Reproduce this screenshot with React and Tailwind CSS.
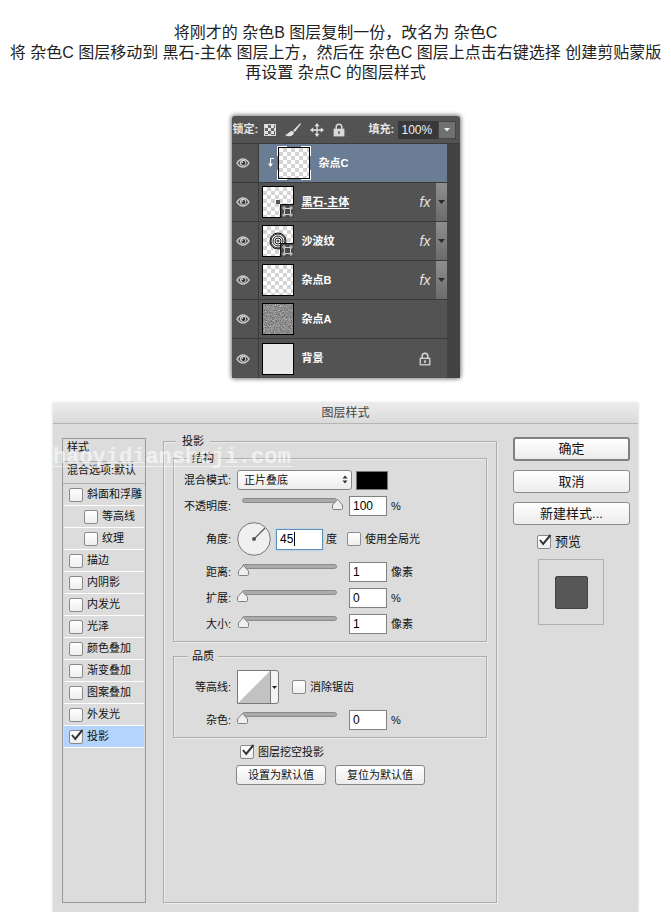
import React, { useState } from 'react';

const EFFECTS = [
  { name: '斜面和浮雕' },
  { name: '等高线', indent: true },
  { name: '纹理', indent: true },
  { name: '描边' },
  { name: '内阴影' },
  { name: '内发光' },
  { name: '光泽' },
  { name: '颜色叠加' },
  { name: '渐变叠加' },
  { name: '图案叠加' },
  { name: '外发光' },
  { name: '投影', checked: true },
];

const LAYERS = [
  { name: '杂点C', thumb: 'checker', selected: true },
  { name: '黑石-主体', thumb: 'dot', fx: true, underline: true },
  { name: '沙波纹', thumb: 'rings', fx: true },
  { name: '杂点B', thumb: 'checker', fx: true },
  { name: '杂点A', thumb: 'noise' },
  { name: '背景', thumb: 'plain', locked: true },
];

function Eye() {
  return (
    <svg width="14" height="10" viewBox="0 0 14 10" aria-hidden="true">
      <path d="M1 5.200C2.600 2.200 4.600 1 7 1s4.400 1.200 6 4.200C11.400 7.900 9.400 9 7 9S2.600 7.900 1 5.200Z" fill="#555" stroke="#c8c8c8" strokeWidth="1.400" />
      <circle cx="7" cy="4.800" r="3" fill="#d8d8d8" />
      <circle cx="7.300" cy="5" r="2" fill="#2e2e2e" />
      <circle cx="6.500" cy="4.200" r=".7" fill="#eee" />
    </svg>
  );
}

function Padlock({ filled }) {
  return (
    <svg width="12" height="14" viewBox="0 0 12 14" aria-hidden="true">
      <path d="M3.200 6.500V4a2.800 2.800 0 0 1 5.600 0v2.500" fill="none" stroke="#dcdcdc" strokeWidth="1.500" />
      <rect x="1.200" y="6.300" width="9.600" height="6.500" fill={filled ? '#dcdcdc' : '#555'} stroke="#dcdcdc" strokeWidth="1.200" />
      <path d="M6 8.200v2.800" stroke={filled ? '#555' : '#dcdcdc'} strokeWidth="1.500" />
    </svg>
  );
}

function ShapeBadge() {
  return (
    <svg className="absolute -right-px -bottom-px" width="14" height="14" viewBox="0 0 14 14" aria-hidden="true">
      <rect width="14" height="14" fill="#4a4a4a" />
      <path d="M.5 14V.5H14" fill="none" stroke="#111" />
      <path d="M4.500 4.500h6v6h-6z" fill="none" stroke="#ccc" />
      <path d="M3 3h2v2H3zM10 3h2v2h-2zM3 10h2v2H3zM10 10h2v2h-2z" fill="#4a4a4a" stroke="#ddd" strokeWidth=".9" />
    </svg>
  );
}

function Thumb({ kind }) {
  if (kind === 'plain') return <div className="size-8 shrink-0 border border-black bg-[#e8e8e8]" />;
  if (kind === 'noise') {
    return (
      <div className="size-8 shrink-0 border border-black bg-[#8b8b8b]">
        <svg width="30" height="30" className="block" aria-hidden="true">
          <filter id="grain" colorInterpolationFilters="sRGB">
            <feTurbulence type="fractalNoise" baseFrequency="0.8" numOctaves="2" />
            <feColorMatrix values="0.6 0 0 0 0.25  0.6 0 0 0 0.25  0.6 0 0 0 0.25  0 0 0 0 1" />
          </filter>
          <rect width="30" height="30" filter="url(#grain)" />
        </svg>
      </div>
    );
  }
  return (
    <div className="relative size-8 shrink-0 border border-black bg-white bg-[conic-gradient(#d4d4d4_25%,#fff_0_50%,#d4d4d4_0_75%,#fff_0)] bg-[length:8px_8px]">
      {kind === 'dot' && (
        <svg width="30" height="30" className="block" aria-hidden="true">
          <rect x="13" y="13" width="4" height="4" fill="#555" />
        </svg>
      )}
      {kind === 'rings' && (
        <svg width="30" height="30" className="block" fill="none" stroke="#111" aria-hidden="true">
          <circle cx="15" cy="15" r="8" fill="#fff" />
          <circle cx="15" cy="15" r="1" />
          <circle cx="15" cy="15" r="3" />
          <circle cx="15" cy="15" r="5" />
          <circle cx="15" cy="15" r="7" />
        </svg>
      )}
      {(kind === 'dot' || kind === 'rings') && <ShapeBadge />}
    </div>
  );
}

function LayerRow({ layer }) {
  return (
    <li className="flex h-[39px] border-b border-[#3a3a3a] last:border-b-0">
      <button aria-label={`显示 ${layer.name}`} className="flex w-[27px] shrink-0 items-center justify-center border-r border-[#3a3a3a] pr-1">
        <Eye />
      </button>
      <div className={`flex flex-1 items-center gap-2 pl-[3px] ${layer.selected ? 'bg-[#6a7d95]' : ''}`}>
        {layer.selected ? (
          <div className="flex items-center">
            <svg width="15" height="12" viewBox="0 0 15 12" fill="none" stroke="#fff" aria-hidden="true">
              <path d="M12 1.500H8.500V9" />
              <path d="M6 6.500h5L8.500 10z" fill="#fff" stroke="none" />
            </svg>
            <div className="relative p-px">
              <Thumb kind={layer.thumb} />
              <svg className="absolute inset-0" width="34" height="34" fill="none" stroke="#fff" strokeWidth="1" aria-hidden="true">
                <path d="M.5 10V.5H10M24 .5h9.500V10M33.500 24v9.500H24M10 33.500H.5V24" />
              </svg>
            </div>
          </div>
        ) : (
          <Thumb kind={layer.thumb} />
        )}
        <span className={`flex-1 text-[11px] font-bold text-white ${layer.underline ? 'underline underline-offset-2' : ''}`}>{layer.name}</span>
        {layer.locked && <span className="pr-4"><Padlock /></span>}
      </div>
      {layer.fx && (
        <div className="flex">
          <span className="flex w-4 items-center font-['Liberation_Sans'] text-[14px] italic text-[#e4e4e4]">fx</span>
          <button aria-label="展开效果" className="flex w-[11px] items-center justify-center bg-gradient-to-b from-[#8f8f8f] to-[#6c6c6c]">
            <svg width="7" height="4" aria-hidden="true"><path d="M0 0h7L3.500 4z" fill="#2b2b2b" /></svg>
          </button>
        </div>
      )}
    </li>
  );
}

function LayersPanel() {
  return (
    <section className="w-[228px] rounded-[3px] bg-[#535353] text-white shadow-[0_0_4px_1px_#777]">
      <div className="flex h-7 items-center border-b border-[#3a3a3a] pr-1 pl-px">
        <span className="w-[31px] text-[11px] font-bold whitespace-nowrap text-[#e6e6e6]">锁定:</span>
        <div className="flex flex-1 items-center gap-[9px]">
          <svg width="12" height="12" viewBox="0 0 12 12" aria-hidden="true">
            <rect x=".5" y=".5" width="11" height="11" fill="#666" stroke="#d8d8d8" />
            <path d="M1 1h3v3H1zM7 1h3v3H7zM4 4h3v3H4zM1 7h3v3H1zM7 7h3v3H7zM10 4h1v3h-1zM4 10h3v1H4z" fill="#e2e2e2" />
          </svg>
          <svg width="16" height="14" viewBox="0 0 16 14" aria-hidden="true">
            <path d="M15.500 0 8 7.500 9.800 9 16 1z" fill="#e2e2e2" />
            <path d="M7.200 8C4.500 7.700 4.300 10.500 0 12c3.500 2.500 8.800 1.200 9-2.500z" fill="#e2e2e2" />
          </svg>
          <svg width="14" height="14" viewBox="0 0 14 14" aria-hidden="true">
            <path d="M7 2v10M2 7h10" stroke="#e2e2e2" strokeWidth="1.300" />
            <path d="M7 0l2.500 3.200h-5zM7 14l2.500-3.200h-5zM0 7l3.200-2.500v5zM14 7l-3.200-2.500v5z" fill="#e2e2e2" />
          </svg>
          <Padlock filled />
        </div>
        <label htmlFor="fill" className="w-[29px] text-[11px] font-bold whitespace-nowrap text-[#e6e6e6]">填充:</label>
        <input id="fill" defaultValue="100%" className="h-[18px] w-10 bg-[#383838] px-1 text-[12px] text-[#f0f0f0]" />
        <button aria-label="填充选项" className="flex h-[18px] w-[18px] items-center justify-center border border-[#444] bg-[#707070]">
          <svg width="6" height="4" aria-hidden="true"><path d="M0 0h6L3 3.500z" fill="#eee" /></svg>
        </button>
      </div>
      <div className="bg-[#434343] pr-[13px]">
        <ul className="bg-[#535353]">
          {LAYERS.map((l) => <LayerRow key={l.name} layer={l} />)}
        </ul>
      </div>
    </section>
  );
}

function Check({ children, defaultChecked = false, className = '' }) {
  return (
    <label className={`flex items-center gap-1 whitespace-nowrap ${className}`}>
      <span className="relative block size-[14px] shrink-0">
        <input type="checkbox" defaultChecked={defaultChecked} className="peer block size-[14px] appearance-none rounded-[2px] border border-[#8a8a8a] bg-gradient-to-b from-white to-[#eee]" />
        <svg className="pointer-events-none absolute -top-px left-0 hidden peer-checked:block" width="15" height="14" viewBox="0 0 15 14" fill="none" stroke="#333" strokeWidth="2" aria-hidden="true">
          <path d="M3 6l3.200 4L13.500 1" />
        </svg>
      </span>
      {children}
    </label>
  );
}

function Slider({ id, value, onChange }) {
  return (
    <div className="relative h-5 w-[112px]">
      <svg width="106" height="20" className="block" aria-hidden="true">
        <rect x="5.500" y="2.500" width="94" height="4" rx="2" fill="#aaa" stroke="#8a8a8a" />
        <path transform={`translate(${value * 0.95} 0)`} d="M.5 12.500V9L5.500 3.500 10.500 9V12.500Q10.500 13.500 9.500 13.500H1.500Q.5 13.500 .5 12.500Z" fill="#efefef" stroke="#808080" />
      </svg>
      <input type="range" aria-labelledby={`${id}-label`} min="0" max="100" value={value} onChange={onChange} className="absolute inset-0 w-[106px] opacity-0" />
    </div>
  );
}

function RowLabel({ id, children }) {
  return <label id={`${id}-label`} htmlFor={id} className="mr-[6px] w-14 shrink-0 text-right whitespace-nowrap">{children}</label>;
}

const numberBox = 'h-5 w-[38px] border border-[#808080] bg-white px-[3px] text-[12px] text-black outline-none';

function SliderRow({ id, label, initial, unit }) {
  const [value, setValue] = useState(initial);
  const update = (e) => setValue(Number(e.target.value) || 0);
  return (
    <div className="flex items-center">
      <RowLabel id={id}>{label}</RowLabel>
      <Slider id={id} value={value} onChange={update} />
      <input id={id} value={value} onChange={update} className={numberBox} />
      <span className="ml-1 whitespace-nowrap">{unit}</span>
    </div>
  );
}

function SmallButton({ children }) {
  return <button className="h-5 w-[90px] rounded-[3px] border border-[#858585] bg-gradient-to-b from-white to-[#ececec] text-[11px] leading-4">{children}</button>;
}

function SideButton({ children, primary }) {
  return (
    <button className={`w-full rounded-[3px] bg-gradient-to-b from-white to-[#ececec] text-[13px] ${primary ? 'h-6 border-2 border-[#808080]' : 'h-[23px] border border-[#8a8a8a]'}`}>
      {children}
    </button>
  );
}

function StylesList() {
  return (
    <aside className="mt-[5px] w-[84px] shrink-0 border border-[#999]">
      <div className="h-[23px] border-b border-[#aaa] pl-1 leading-4">样式</div>
      <div className="h-[22px] border-b border-[#aaa] pl-1 leading-4 whitespace-nowrap">混合选项:默认</div>
      <ul>
        {EFFECTS.map((e) => (
          <li key={e.name} className={`mx-px flex h-[22px] items-center border-b border-white ${e.indent ? 'pl-5' : 'pl-[5px]'} ${e.checked ? 'bg-[#b3d5fd]' : ''}`}>
            <Check defaultChecked={e.checked}>{e.name}</Check>
          </li>
        ))}
      </ul>
    </aside>
  );
}

const group = 'min-w-0 border border-[#adadad] shadow-[inset_1px_1px_0_#ebebeb,1px_1px_0_#ebebeb]';
const groupTitle = 'h-4 bg-[#dcdcdc] leading-4';

function StructureGroup() {
  return (
    <fieldset className={`${group} px-px pb-[7px]`}>
      <legend className={`${groupTitle} ml-[13px] px-1`}>结构</legend>
      <div className="flex flex-col gap-[6px] pt-1">
        <div className="flex items-center">
          <RowLabel id="blend">混合模式:</RowLabel>
          <div className="relative">
            <select id="blend" defaultValue="正片叠底" className="block h-5 w-[115px] appearance-none rounded-[3px] border border-[#858585] bg-gradient-to-b from-white to-[#ececec] pl-[6px] text-[11px] leading-4">
              <option>正片叠底</option>
            </select>
            <svg className="pointer-events-none absolute top-[5px] right-[4px]" width="6" height="9" aria-hidden="true">
              <path d="M.5 3.500h5L3 .5zM.5 5.500h5L3 8.500z" fill="#333" />
            </svg>
          </div>
          <button aria-label="阴影颜色" className="ml-1 h-[19px] w-8 border border-[#777] bg-black" />
        </div>
        <SliderRow id="opacity" label="不透明度:" initial={100} unit="%" />
        <div className="flex h-[34px] items-center">
          <RowLabel id="angle">角度:</RowLabel>
          <svg width="34" height="34" viewBox="0 0 34 34" aria-hidden="true">
            <circle cx="17" cy="17" r="16.300" fill="#f0f0f0" stroke="#777" />
            <circle cx="17" cy="17" r="2" fill="#555" />
            <path d="M17 17L28 6" stroke="#555" strokeWidth="1.200" />
          </svg>
          <div className="relative ml-[5px]">
            <input id="angle" defaultValue="45" className="block h-[21px] w-[47px] border border-[#5b8fc0] bg-white px-[3px] text-[12px] text-black shadow-[0_0_2px_#9cc8ee] outline-none" />
            <span className="absolute top-[3px] left-[18px] h-[14px] w-px bg-black" />
          </div>
          <span className="ml-[3px] w-[21px]">度</span>
          <Check>使用全局光</Check>
        </div>
        <SliderRow id="distance" label="距离:" initial={1} unit="像素" />
        <SliderRow id="spread" label="扩展:" initial={0} unit="%" />
        <SliderRow id="size" label="大小:" initial={1} unit="像素" />
      </div>
    </fieldset>
  );
}

function QualityGroup() {
  return (
    <fieldset className={`${group} mt-[6px] px-px pb-[7px]`}>
      <legend className={`${groupTitle} ml-[13px] px-1`}>品质</legend>
      <div className="flex flex-col gap-[6px] pt-[6px]">
        <div className="flex items-center">
          <RowLabel id="contour">等高线:</RowLabel>
          <button id="contour" className="flex h-[34px] w-[42px] rounded-r-[3px] border border-[#777] bg-[#f4f4f4]">
            <svg width="32" height="32" aria-hidden="true">
              <rect width="32" height="32" fill="#fff" />
              <path d="M0 32L32 0V32z" fill="#c2c2c2" />
            </svg>
            <span className="flex h-8 w-2 items-center justify-center border-l border-[#777]">
              <svg width="5" height="3" aria-hidden="true"><path d="M0 0h5L2.500 3z" fill="#222" /></svg>
            </span>
          </button>
          <Check className="ml-[13px]">消除锯齿</Check>
        </div>
        <SliderRow id="noise" label="杂色:" initial={0} unit="%" />
      </div>
    </fieldset>
  );
}

function LayerStyleDialog() {
  return (
    <section className="relative flex w-full max-w-[585px] flex-1 flex-col bg-[#dcdcdc] text-[11px] text-[#111] shadow-[0_0_3px_#ccc]">
      <h2 className="h-[21px] border-b border-[#b5b5b5] bg-gradient-to-b from-[#ececec] to-[#dadada] text-center text-[12px] leading-5 text-[#444]">图层样式</h2>
      <div className="flex flex-1 pt-[9px] pr-2 pb-[9px] pl-[9px]">
        <StylesList />
        <fieldset className={`${group} ml-[17px] flex-1 px-[9px]`}>
          <legend className={`${groupTitle} ml-[3px] px-[6px]`}>投影</legend>
          <div className="pt-px">
            <StructureGroup />
            <QualityGroup />
            <Check defaultChecked className="mt-1 ml-[67px] h-5">图层挖空投影</Check>
            <div className="mt-[3px] ml-[63px] flex gap-[9px]">
              <SmallButton>设置为默认值</SmallButton>
              <SmallButton>复位为默认值</SmallButton>
            </div>
          </div>
        </fieldset>
        <div className="mt-1 ml-4 flex w-[117px] shrink-0 flex-col gap-[9px]">
          <SideButton primary>确定</SideButton>
          <SideButton>取消</SideButton>
          <SideButton>新建样式...</SideButton>
          <Check defaultChecked className="ml-6 h-4 text-[13px]">预览</Check>
          <div className="ml-[25px] flex size-[66px] items-center justify-center border border-[#b0b0b0]">
            <div className="size-[33px] rounded-[2px] border border-[#444] bg-[#575757]" />
          </div>
        </div>
      </div>
      <div className="pointer-events-none absolute top-[43px] left-0 w-[240px] font-['Liberation_Mono',monospace] text-[22px] leading-6 font-bold text-white/60">
        <div className="absolute top-[20px] left-0 h-px w-full bg-white/50" />
        haoyidiansheji.com
      </div>
    </section>
  );
}

export default function App() {
  return (
    <main className="flex min-h-screen flex-col bg-white font-['Liberation_Sans','Noto_Sans_CJK_SC',sans-serif] text-[#222]">
      <div className="pt-[23px] text-center text-[16px] leading-5">
        <p>将刚才的 杂色B 图层复制一份，改名为 杂色C</p>
        <p>将 杂色C 图层移动到 黑石-主体 图层上方，然后在 杂色C 图层上点击右键选择 创建剪贴蒙版</p>
        <p>再设置 杂点C 的图层样式</p>
      </div>
      <div className="flex flex-1 flex-col items-center gap-[25px] pt-[33px] pl-5">
        <LayersPanel />
        <LayerStyleDialog />
      </div>
    </main>
  );
}
